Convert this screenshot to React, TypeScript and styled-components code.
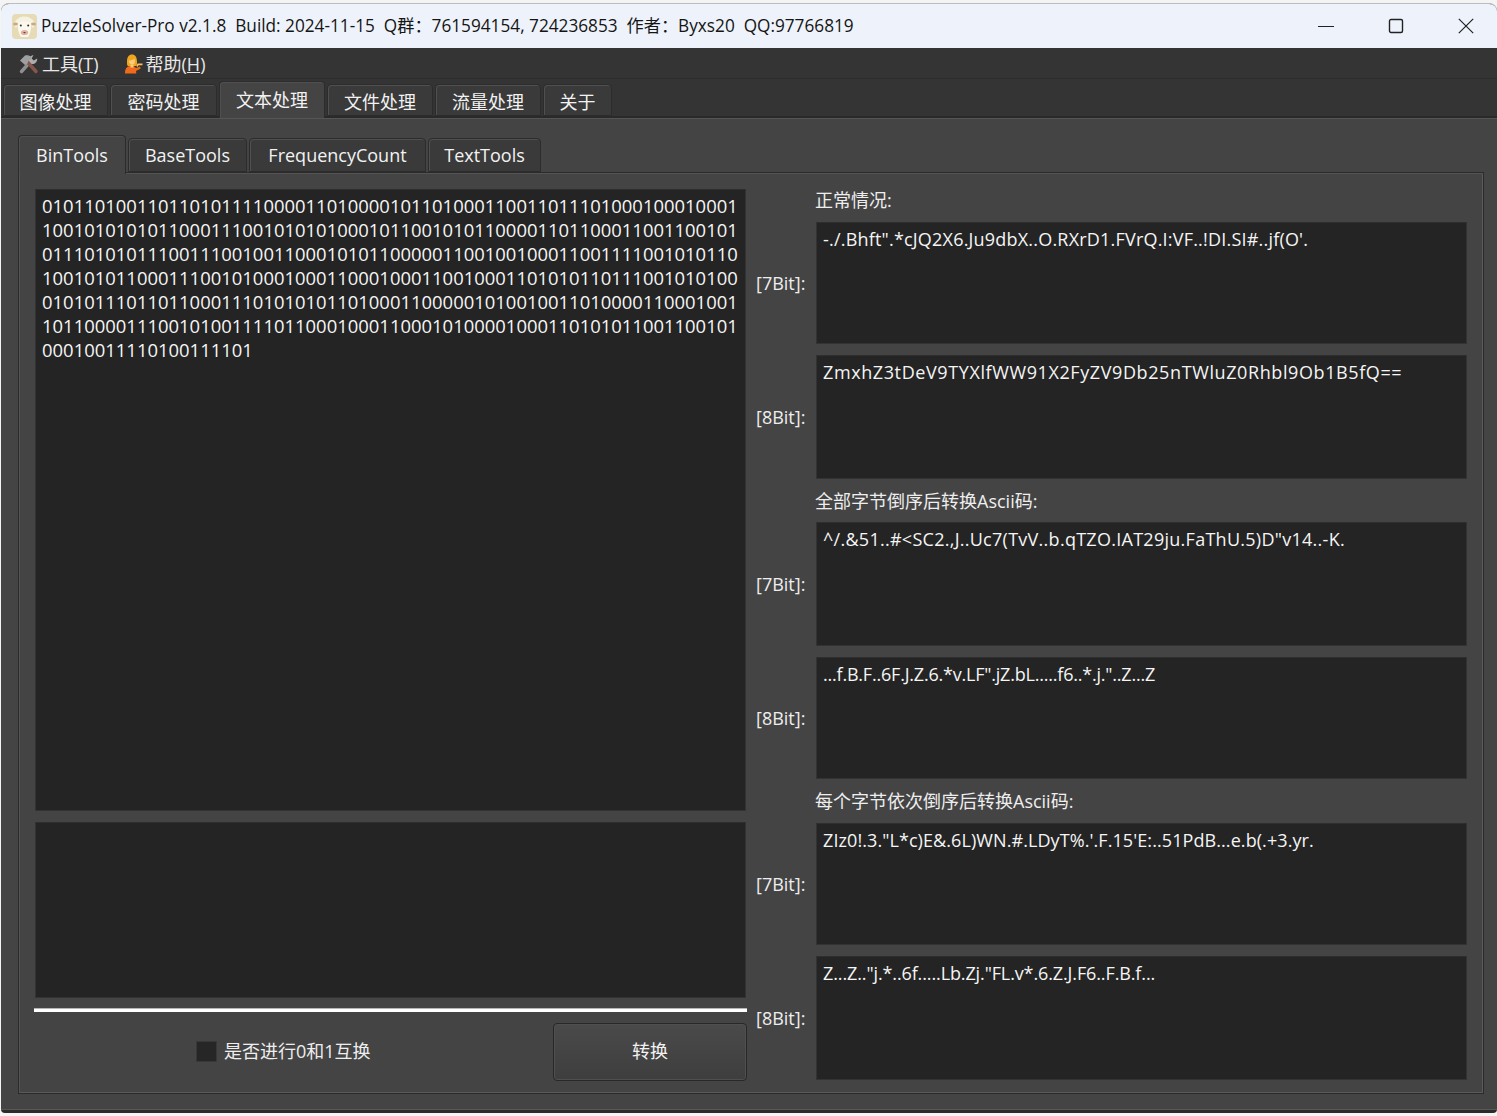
import React from "react";
import styled, { createGlobalStyle } from "styled-components";

const UI_FONT = `"Open Sans", "Noto Sans CJK SC", sans-serif`;

const Global = createGlobalStyle`
  html, body { margin: 0; padding: 0; background: #f4f4f4; }
  * { box-sizing: border-box; }
  body { font-family: ${UI_FONT}; font-size: 18px; color: #f2f2f2; }
`;

const Desktop = styled.div`
  width: 1497px;
  height: 1116px;
  padding: 3px 0 3px 1px;
  overflow: hidden;
`;
const Window = styled.div`
  height: 100%;
  display: flex;
  flex-direction: column;
  background: #2b2b2b;
  border-top: 1px solid #bdbdbd;
  border-radius: 8px 8px 4px 4px;
  overflow: hidden;
`;
const TitleBar = styled.div`
  height: 44px;
  flex: none;
  display: flex;
  align-items: center;
  gap: 4px;
  padding-left: 11px;
  background: #eef3fb;
  color: #151515;
`;
const Title = styled.span`
  font-size: 17.22px;
  white-space: pre;
  line-height: 24px;
  padding-bottom: 1px;
`;
const WindowControls = styled.div`
  margin-left: auto;
  margin-right: 23px;
  display: flex;
  gap: 54px;
  align-items: center;
`;
const MenuBar = styled.div`
  height: 31px;
  flex: none;
  display: flex;
  align-items: center;
  padding: 1px 0 0 18px;
  gap: 25px;
  background: #343434;
  border-bottom: 1px solid #2c2c2c;
`;
const MenuItem = styled.div`
  display: flex;
  align-items: center;
  gap: 3px;
  line-height: 24px;
  color: #e8e8e8;
`;
const MainTabs = styled.div`
  height: 39px;
  flex: none;
  display: flex;
  align-items: flex-end;
  gap: 2px;
  padding-left: 2px;
  background: #343434;
  border-bottom: 2px solid #2a2a2a;
`;
const Tab = styled.div<{ $active?: boolean; $w: number }>`
  width: ${(p) => p.$w}px;
  display: flex;
  align-items: center;
  justify-content: center;
  background: ${(p) => (p.$active ? "#444444" : "#3a3a3a")};
  border: 1px solid #2c2c2c;
  border-bottom: ${(p) => (p.$active ? "none" : "1px solid #2c2c2c")};
  border-radius: 4px 4px 0 0;
  box-shadow: inset 1px 1px 0 #505050;
  line-height: 24px;
  color: #f2f2f2;
  position: relative;
  z-index: ${(p) => (p.$active ? 1 : 0)};
  margin-bottom: ${(p) => (p.$active ? -2 : 0)}px;
`;
const MainTab = styled(Tab)`
  height: ${(p) => (p.$active ? 37 : 32)}px;
  padding-top: ${(p) => (p.$active ? 0 : 4)}px;
`;
const SubTab = styled(Tab)`
  height: ${(p) => (p.$active ? 39 : 34)}px;
  padding-bottom: 1px;
`;
const OuterPane = styled.div`
  height: 992px;
  flex: none;
  padding: 16px 13px 15px 17px;
  display: flex;
  flex-direction: column;
  background: #444444;
  border-top: 1px solid #555555;
  border-bottom: 1px solid #585858;
`;
const SubTabs = styled.div`
  height: 37px;
  flex: none;
  display: flex;
  align-items: flex-end;
  gap: 2px;
`;
const SubPane = styled.div`
  flex: 1;
  min-height: 0;
  display: grid;
  grid-template-columns: 713px 1fr;
  column-gap: 9px;
  padding: 16px 15px 12px 15px;
  background: #444444;
  border: 1px solid #2b2b2b;
  box-shadow: inset 1px 1px 0 #545454, inset -1px -1px 0 #5a5a5a;
`;
const LeftColumn = styled.div`
  display: flex;
  flex-direction: column;
`;
const TextBox = styled.div`
  background: #242424;
  border: 1px solid #333333;
  border-top-color: #2e2e2e;
  padding: 4px 6px;
  margin: 0 1px;
  line-height: 24px;
  color: #f5f5f5;
  overflow: hidden;
  white-space: pre-wrap;
`;
const BinaryBox = styled(TextBox)`
  height: 622px;
  font-size: 18.45px;
  word-break: break-all;
`;
const InputBox = styled(TextBox)`
  height: 176px;
  margin-top: 11px;
`;
const OutputBox = styled(TextBox)<{ $tracking: number }>`
  letter-spacing: ${(p) => p.$tracking}px;
`;
const Progress = styled.div`
  height: 4px;
  margin-top: 10px;
  background: #ffffff;
  border-top: 1px solid #b5b5b5;
`;
const Controls = styled.div`
  margin-top: 11px;
  display: flex;
  align-items: center;
  justify-content: space-between;
  padding-left: 162px;
`;
const CheckRow = styled.label`
  display: flex;
  align-items: center;
  gap: 7px;
  line-height: 24px;
  color: #eeeeee;
  margin-bottom: 2px;
`;
const CheckBox = styled.span`
  width: 21px;
  height: 21px;
  background: #262626;
  border: 1px solid #383838;
`;
const ActionButton = styled.button`
  width: 194px;
  height: 58px;
  padding: 0 0 4px;
  font: inherit;
  color: #f2f2f2;
  background: linear-gradient(#4a4a4a, #3e3e3e);
  border: 1px solid #282828;
  border-radius: 4px;
  box-shadow: inset 0 0 0 1px #4f4f4f;
`;
const ResultGrid = styled.div`
  display: grid;
  grid-template-columns: 49px 1fr;
  grid-template-rows: 22px 122px 124px 21px 124px 122px 22px 122px 124px;
  column-gap: 10px;
  row-gap: 11px;
`;
const Heading = styled.div`
  grid-column: 2;
  line-height: 22px;
  white-space: nowrap;
  color: #eeeeee;
`;
const BitLabel = styled.div`
  align-self: center;
  white-space: nowrap;
  line-height: 24px;
  color: #eeeeee;
`;

const Logo = () => (
  <svg width="25" height="25" viewBox="0 0 25 25">
    <rect width="25" height="25" rx="4" fill="#e6dbb4" />
    <path d="M3 8c1-3 3-3 4-4 2-2 9-2 11 0 1 1 3 1 4 4 1 3 0 5-1 6l-2-3H6l-2 3C3 13 2 11 3 8z" fill="#f6f2e2" />
    <ellipse cx="3.6" cy="10" rx="2.6" ry="1.5" fill="#caa987" />
    <ellipse cx="21.4" cy="10" rx="2.6" ry="1.5" fill="#caa987" />
    <path d="M6 9c2-2 11-2 13 0 1 4-1 12-3 14H9C7 21 5 13 6 9z" fill="#fbf8ee" />
    <circle cx="8.8" cy="11.5" r="1" fill="#3b2c22" />
    <circle cx="16.2" cy="11.5" r="1" fill="#3b2c22" />
    <ellipse cx="12.5" cy="18.5" rx="3.6" ry="2.6" fill="#e2b1a2" />
    <path d="M11 18h3l-1.500 1.500z" fill="#6f3f3a" />
  </svg>
);
const ToolsIcon = () => (
  <svg width="20" height="20" viewBox="0 0 20 20">
    <path d="M2.500 17.500 12 7" stroke="#8f8f8f" strokeWidth="3.400" strokeLinecap="round" />
    <path d="M11 9.500a4.600 4.600 0 0 1 2-8l1.500-.5-1.800 3.400 2 2 3.500-1.900c.3 3.800-3.200 6.500-6.500 5.300z" fill="#adadad" />
    <path d="M17 17.500 8.500 8" stroke="#85564a" strokeWidth="3.400" strokeLinecap="round" />
    <path d="M1 6.500 6 1.500c2-.7 4-.3 5.500 1L13 4l-3.500 3-1 2.500-2.500 1.500z" fill="#9f9f9f" />
  </svg>
);
const PersonIcon = () => (
  <svg width="19" height="20" viewBox="0 0 19 20">
    <path d="M1 19.500c0-4.500 1.500-7 5-7.500h3.500l2.500 2 4-1.500.7 2-4.700 2.500.3 2.500z" fill="#ef6a1c" />
    <path d="M3 7.500C3 3 5 .5 8 .5s5 2.500 5 7c0 2 .2 3-.8 4.500H3.800C2.800 10.500 3 9.500 3 7.500z" fill="#efa51e" />
    <path d="M5 6.500c1.800 0 4.300-.5 5.500-2 .6 1.400.7 3.800-.2 5.300-.9 1.300-3.400 1.300-4.300 0C5.300 9 5 7.800 5 6.500z" fill="#f9cd7c" />
    <path d="M6.500 11h3v2.500h-3z" fill="#f9cd7c" />
    <path d="M13.500 9.500h5v1.700h-4l-1 1.800-1.200-1z" fill="#f7c25a" />
  </svg>
);
const MinIcon = () => (
  <svg width="16" height="16" viewBox="0 0 16 16"><path d="M0 8.500h16" stroke="#222" strokeWidth="1.200" /></svg>
);
const MaxIcon = () => (
  <svg width="16" height="16" viewBox="0 0 16 16"><rect x="1.500" y="1.500" width="13" height="13" rx="1.500" fill="none" stroke="#222" strokeWidth="1.400" /></svg>
);
const CloseIcon = () => (
  <svg width="16" height="16" viewBox="0 0 16 16"><path d="M.8.8l14.400 14.400M15.200.8.8 15.200" stroke="#222" strokeWidth="1.200" /></svg>
);

const BASE64 = "ZmxhZ3tDeV9TYXlfWW91X2FyZV9Db25nTWluZ0Rhbl9Ob1B5fQ==";
const BITS = Array.from(BASE64)
  .map((c) => c.charCodeAt(0).toString(2).padStart(8, "0"))
  .join("");
const BIN_LINES = (BITS.match(/.{1,66}/g) ?? []).join("\n");

const mainTabs = [
  { label: "图像处理", w: 105 },
  { label: "密码处理", w: 107 },
  { label: "文本处理", w: 106, active: true },
  { label: "文件处理", w: 106 },
  { label: "流量处理", w: 106 },
  { label: "关于", w: 69 },
];
const subTabs = [
  { label: "BinTools", w: 108, active: true },
  { label: "BaseTools", w: 119 },
  { label: "FrequencyCount", w: 177 },
  { label: "TextTools", w: 113 },
];

const groups = [
  {
    title: "正常情况:",
    seven: `-./.Bhft".*cJQ2X6.Ju9dbX..O.RXrD1.FVrQ.I:VF..!DI.SI#..jf(O'.`,
    sevenTracking: 0.2,
    eight: "ZmxhZ3tDeV9TYXlfWW91X2FyZV9Db25nTWluZ0Rhbl9Ob1B5fQ==",
    eightTracking: 0.6,
  },
  {
    title: "全部字节倒序后转换Ascii码:",
    seven: `^/.&51..#<SC2.,J..Uc7(TvV..b.qTZO.IAT29ju.FaThU.5)D"v14..-K.`,
    sevenTracking: 0.27,
    eight: `...f.B.F..6F.J.Z.6.*v.LF".jZ.bL.....f6..*.j."..Z...Z`,
    eightTracking: -0.21,
  },
  {
    title: "每个字节依次倒序后转换Ascii码:",
    seven: `ZIz0!.3."L*c)E&.6L)WN.#.LDyT%.'.F.15'E:..51PdB...e.b(.+3.yr.`,
    sevenTracking: 0.08,
    eight: `Z...Z.."j.*..6f.....Lb.Zj."FL.v*.6.Z.J.F6..F.B.f...`,
    eightTracking: -0.12,
  },
];

export default function App() {
  return (
    <>
      <Global />
      <Desktop>
        <Window>
          <TitleBar>
            <Logo />
            <Title>PuzzleSolver-Pro v2.1.8  Build: 2024-11-15  Q群：761594154, 724236853  作者：Byxs20  QQ:97766819</Title>
            <WindowControls>
              <MinIcon />
              <MaxIcon />
              <CloseIcon />
            </WindowControls>
          </TitleBar>
          <MenuBar>
            <MenuItem><ToolsIcon /><span>工具(<u>T</u>)</span></MenuItem>
            <MenuItem><PersonIcon /><span>帮助(<u>H</u>)</span></MenuItem>
          </MenuBar>
          <MainTabs>
            {mainTabs.map((t) => (
              <MainTab key={t.label} $w={t.w} $active={t.active}>{t.label}</MainTab>
            ))}
          </MainTabs>
          <OuterPane>
            <SubTabs>
              {subTabs.map((t) => (
                <SubTab key={t.label} $w={t.w} $active={t.active}>{t.label}</SubTab>
              ))}
            </SubTabs>
            <SubPane>
              <LeftColumn>
                <BinaryBox>{BIN_LINES}</BinaryBox>
                <InputBox />
                <Progress />
                <Controls>
                  <CheckRow><CheckBox />是否进行0和1互换</CheckRow>
                  <ActionButton>转换</ActionButton>
                </Controls>
              </LeftColumn>
              <ResultGrid>
                {groups.map((g) => (
                  <React.Fragment key={g.title}>
                    <Heading>{g.title}</Heading>
                    <BitLabel>[7Bit]:</BitLabel>
                    <OutputBox $tracking={g.sevenTracking}>{g.seven}</OutputBox>
                    <BitLabel>[8Bit]:</BitLabel>
                    <OutputBox $tracking={g.eightTracking}>{g.eight}</OutputBox>
                  </React.Fragment>
                ))}
              </ResultGrid>
            </SubPane>
          </OuterPane>
        </Window>
      </Desktop>
    </>
  );
}
